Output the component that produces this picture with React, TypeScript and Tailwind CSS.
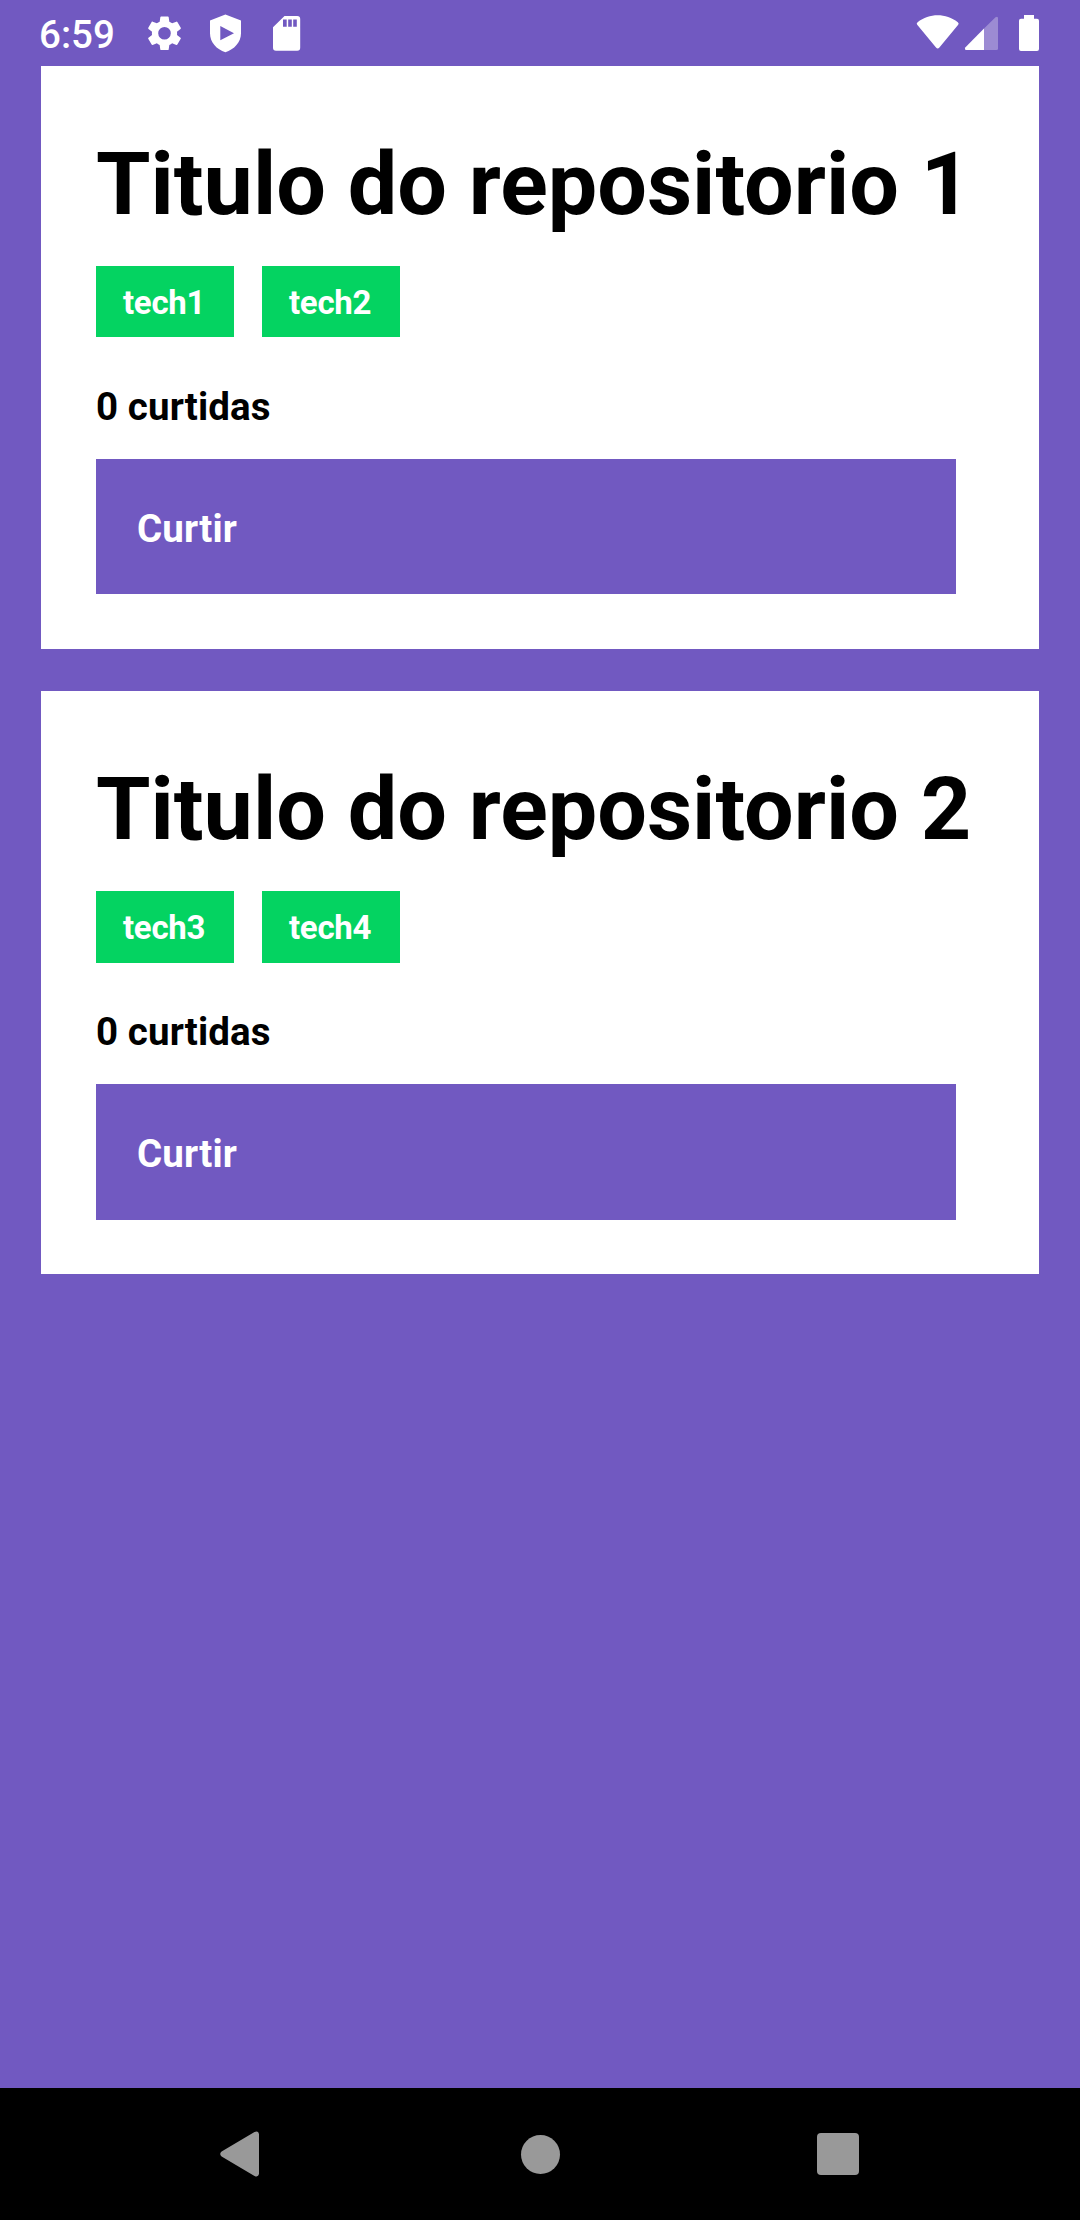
type Repo = { title: string; techs: string[]; likes: number };

const repositories: Repo[] = [
  { title: "Titulo do repositorio 1", techs: ["tech1", "tech2"], likes: 0 },
  { title: "Titulo do repositorio 2", techs: ["tech3", "tech4"], likes: 0 },
];

function StatusBar() {
  return (
    <header className="flex h-[66px] items-start justify-between pl-[39px] pr-[41px] text-white">
      <div className="flex">
        <span className="mt-3 w-[109px] text-[38.5px] font-medium leading-[45px]">6:59</span>
        <svg className="h-[66px] w-[160px]" viewBox="148 0 160 66" fill="currentColor">
          <g transform="translate(143.5 12.3) scale(1.75)">
            <path d="M19.14 12.94c.04-.3.06-.61.06-.94 0-.32-.02-.64-.07-.94l2.03-1.58a.49.49 0 0 0 .12-.61l-1.92-3.32a.49.49 0 0 0-.59-.22l-2.39.96c-.5-.38-1.03-.7-1.62-.94l-.36-2.54a.48.48 0 0 0-.48-.41h-3.84c-.24 0-.43.17-.47.41l-.36 2.54c-.59.24-1.13.57-1.62.94l-2.39-.96c-.22-.08-.47 0-.59.22L2.74 8.87c-.12.21-.08.47.12.61l2.03 1.58c-.05.3-.09.63-.09.94s.02.64.07.94l-2.03 1.58a.49.49 0 0 0-.12.61l1.92 3.32c.12.22.37.29.59.22l2.39-.96c.5.38 1.03.7 1.62.94l.36 2.54c.05.24.24.41.48.41h3.84c.24 0 .44-.17.47-.41l.36-2.54c.59-.24 1.13-.56 1.62-.94l2.39.96c.22.08.47 0 .59-.22l1.92-3.32a.49.49 0 0 0-.12-.61zM12 15.6A3.6 3.6 0 1 1 12 8.4a3.6 3.6 0 0 1 0 7.2z" />
          </g>
          <path fillRule="evenodd" d="M225.4 14.4 241 20.600v12.700c0 9-6.800 16.300-15.600 18.900-8.800-2.600-15.400-9.900-15.400-18.900V20.600zM220.300 26v14.300l13.700-7.100z" />
          <path fillRule="evenodd" d="M284.500 16h12.700a3 3 0 0 1 3 3v28.700a3 3 0 0 1-3 3h-21.200a3 3 0 0 1-3-3V27.300zM283 19.500v7.200h3.700v-7.200zM288.200 19.500v7.200h3.600v-7.200zM293.200 19.500v7.200h3.600v-7.200z" />
        </svg>
      </div>
      <svg className="h-[66px] w-[124px]" viewBox="915 0 124 66" fill="currentColor">
        <path d="M917.2 24.8q-1.200-1.400.4-2.600c11.700-9.200 28.400-9.200 40.200 0q1.500 1.200.4 2.600l-18.800 22.600q-1.700 2-3.400 0z" />
        <path opacity=".3" d="M984 28.500 995.500 17.300q2.500-1.500 2.500 1V48.500q0 1.500-1.500 1.500H984z" />
        <path d="M984 28.500V50h-17.800q-2.200-.4-.7-2.700z" />
        <path d="M1024 15h10v3.700h3q2 0 2 2V49q0 2-2 2h-16q-2 0-2-2V20.700q0-2 2-2h3z" />
      </svg>
    </header>
  );
}

function RepositoryCard({ title, techs, likes }: Repo) {
  return (
    <article className="h-[583px] bg-white px-[55px] pt-[66px] font-bold text-black">
      <h1 className="h-[134px] whitespace-nowrap text-[88px] leading-[103px]">{title}</h1>
      <div className="flex gap-7">
        {techs.map((tech) => (
          <span
            key={tech}
            className="h-[71.4px] w-[138px] bg-[#04d361] pl-[27px] pt-[17px] text-[33px] leading-[39px] tracking-[-0.3px] text-white"
          >
            {tech}
          </span>
        ))}
      </div>
      <p className="mt-[45.6px] h-[76px] pt-px text-[38.5px] leading-[45px] tracking-[0.1px]">{likes} curtidas</p>
      <button className="flex h-[135.4px] w-[860px] items-start bg-[#7159c1] pl-[41px] pt-[47px] text-[38.5px] leading-[45px] tracking-[0.15px] text-white">
        Curtir
      </button>
    </article>
  );
}

function NavigationBar() {
  return (
    <nav className="flex h-[132px] items-center bg-black pl-[220px] text-[#999]">
      <svg className="h-[46px] w-[40px]" viewBox="0 0 40 46" fill="currentColor">
        <path d="M1.600 20.600 34.500 1.100Q38.200-.5 39 3v40q-.8 3.500-4.500 1.900L1.600 25.400q-2.800-2.400 0-4.800z" />
      </svg>
      <div className="ml-[261px] size-[39px] rounded-full bg-current" />
      <div className="ml-[257px] size-[41.500px] rounded bg-current" />
    </nav>
  );
}

export default function App() {
  return (
    <div className="flex h-[2220px] w-[1080px] flex-col bg-[#7159c1] font-['Roboto',sans-serif]">
      <StatusBar />
      <main className="flex flex-1 flex-col gap-[42.2px] px-[41px]">
        {repositories.map((repo) => (
          <RepositoryCard key={repo.title} {...repo} />
        ))}
      </main>
      <NavigationBar />
    </div>
  );
}
